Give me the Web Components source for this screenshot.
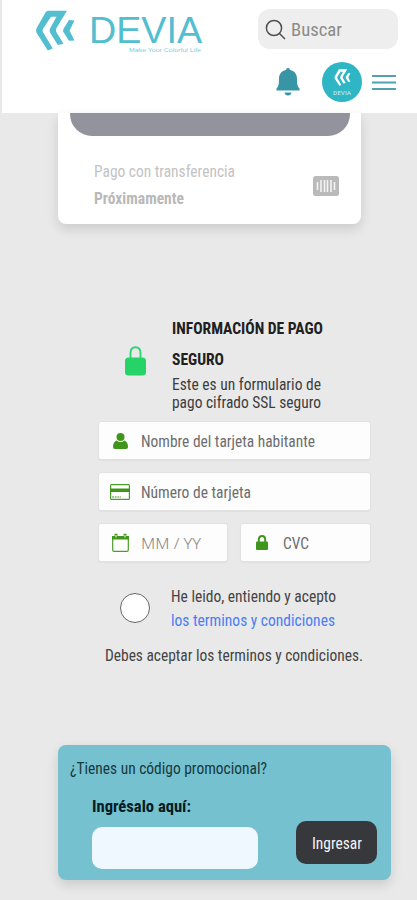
<!DOCTYPE html>
<html lang="es">
<head>
<meta charset="utf-8">
<meta name="viewport" content="width=device-width">
<title>Devia</title>
<style>
html,body{margin:0;height:900px;overflow:hidden;background:#e9e9e9}
body{font-family:"Roboto Condensed",Roboto,"Liberation Sans",sans-serif;color:#333}
</style>
</head>
<body>
<checkout-page></checkout-page>
<script>
const define = (name, html, setup) => customElements.define(name, class extends HTMLElement {
  connectedCallback() {
    if (this.shadowRoot) return;
    const t = document.createElement('template');
    t.innerHTML = html;
    this.attachShadow({mode: 'open'}).append(t.content.cloneNode(true));
    if (setup) setup(this, this.shadowRoot);
  }
});

// One line of condensed text, set to the width given in "w".
define('text-line', `
<style>
:host{display:block;height:18px;line-height:20px;font-size:15.700px;white-space:nowrap;flex:none}
span{display:inline-block;transform-origin:0 50%;vertical-align:top;font-stretch:75%;line-height:inherit}
</style><span><slot></slot></span>`, (host, root) => {
  const w = +host.getAttribute('w'), s = root.querySelector('span');
  host.style.width = w + 'px';
  s.style.transform = 'scaleX(' + w / s.getBoundingClientRect().width + ')';
});

define('brand-mark', `
<style>:host{display:block}svg{display:block;width:100%;height:100%}</style>
<svg viewBox="0 0 39 41" fill="currentColor">
<path d="M12 .8H31L20.800 17.500Q19.300 20 20.600 22.500L27.500 33.800L21.800 35L14.300 23Q13 20.500 14.300 18L20.500 6.800H15L7.200 18.500Q6 20.500 7.200 22.500L16.800 38.500L11.800 40.500L.7 23Q-.5 20.500 .7 18L9.500 2.500Q10.500 .8 12 .8Z"/>
<path d="M33 10L38.500 10.500L33.500 20.500L38.500 30.500L33 30.800L27.700 22.500Q26.500 20.500 27.700 18.500Z"/>
</svg>`);

define('devia-logo', `
<style>
:host{display:flex;width:168px;height:45px;color:#52bed0;flex:none}
brand-mark{width:39px;height:41px;flex:none;margin-top:1px}
div{margin-left:14px;display:flex;flex-direction:column}
.n{font-family:"Liberation Sans",sans-serif;font-size:37px;height:38px;line-height:43px}
.t{font-family:"Liberation Sans",sans-serif;font-size:6px;height:7px;line-height:7px;margin-left:40px;color:#7fcddb}
</style>
<brand-mark></brand-mark>
<div><text-line class="n" w="113">DEVIA</text-line><text-line class="t" w="72">Make Your Colorful Life</text-line></div>`);

define('search-box', `
<style>
:host{display:flex;align-items:center;width:140px;height:40px;border-radius:12px;background:#eee;box-sizing:border-box;padding-left:7px;gap:5px;color:#8b8b8b;margin-left:auto}
text-line{font-size:19px;height:24px;line-height:25px}
</style>
<svg width="21" height="21" viewBox="0 0 21 21" fill="none" stroke="#505050" stroke-width="1.5"><circle cx="9" cy="9" r="7.600"/><path d="M14.500 14.500L20 20"/></svg>
<text-line w="51">Buscar</text-line>`);

define('user-avatar', `
<style>
:host{display:flex;flex-direction:column;align-items:center;width:40px;height:40px;border-radius:50%;background:#2eb6c5;color:#fff;box-sizing:border-box;padding-top:7px}
brand-mark{width:19px;height:17px}
text-line{font-size:6px;height:8px;line-height:8px;margin-top:3px;color:#c4edf1}
</style>
<brand-mark></brand-mark><text-line w="18">DEVIA</text-line>`);

define('app-header', `
<style>
:host{display:block;height:113px;margin-left:2px;background:#fff;box-sizing:border-box}
.a{display:flex;padding:9px 19px 0 34px;height:52px;box-sizing:border-box}
.b{display:flex;justify-content:flex-end;align-items:center;padding-right:21px;height:60px}
user-avatar{margin-left:22px;margin-right:10px}
</style>
<div class="a"><devia-logo></devia-logo><search-box></search-box></div>
<div class="b">
<svg width="24" height="28" viewBox="0 0 24 28" fill="#3795a5"><path d="M12 0Q14 0 14 2C19 3 21 6.500 21 11C21 16 21.500 18.500 23.500 20.500V22.500H.5V20.500C2.500 18.500 3 16 3 11C3 6.500 5 3 10 2Q10 0 12 0ZM8.500 24.500H15.500Q15 27.500 12 27.500T8.500 24.500Z"/></svg>
<user-avatar></user-avatar>
<svg width="24" height="17" viewBox="0 0 24 17" stroke="#4fa0b0" stroke-width="2.200"><path d="M0 2H24M0 8.500H24M0 15H24"/></svg>
</div>`);

define('transfer-card', `
<style>
:host{display:block;margin-left:58px;width:303px;height:111px;background:#fff;border-radius:0 0 8px 8px;box-shadow:0 5px 12px rgba(0,0,0,.13);overflow:hidden}
.bar{margin:0 11px 0 12px;height:23px;border-radius:0 0 22px 22px;background:#92939c}
.row{display:flex;justify-content:space-between;padding:26px 22px 0 36px;color:#c3c3c3}
.l{display:flex;flex-direction:column;gap:9px}
b{color:#b9b9b9}
svg{margin-top:14px}
</style>
<div class="bar"></div>
<div class="row"><div class="l"><text-line w="141">Pago con transferencia</text-line><text-line w="90"><b>Próximamente</b></text-line></div>
<svg width="26" height="20" viewBox="0 0 26 20"><rect width="26" height="20" rx="2.500" fill="#bababa"/><path d="M4.500 6V14M8 4V16M11.500 4V16M14.500 4V16M18 4V16M21.500 6V14" stroke="#f4f4f4" stroke-width="1.600"/></svg></div>`);

define('secure-heading', `
<style>
:host{display:flex;margin:95px 0 0 125px}
svg{margin:27px 26px 0 0;flex:none}
div{display:flex;flex-direction:column;color:#3d3d3d}
b{color:#202020}.s{margin:13px 0 7px}.p{height:17px;line-height:19px}
</style>
<svg width="21" height="30" viewBox="0 0 21 30"><path d="M5.500 13V7Q5.500 1.200 10.500 1.200T15.500 7V13" fill="none" stroke="#29d970" stroke-width="1.900"/><rect y="11.500" width="21" height="18" rx="3.500" fill="#25d366"/></svg>
<div><text-line w="151"><b>INFORMACIÓN DE PAGO</b></text-line><text-line class="s" w="52"><b>SEGURO</b></text-line><text-line w="149">Este es un formulario de</text-line><text-line class="p" w="149">pago cifrado SSL seguro</text-line></div>`);

define('form-field', `
<style>
:host{display:flex;align-items:center;box-sizing:border-box;height:39px;background:#fdfdfd;border:1px solid #e1e1e1;border-radius:3px;color:#6d6d6d;padding-left:11px;box-shadow:0 1px 1px rgba(0,0,0,.04)}
i{display:flex;width:20px;justify-content:center;margin-right:11px}
</style><i><slot name="icon"></slot></i><slot></slot>`);

define('card-form', `
<style>
:host{display:grid;grid-template-columns:130px 131px;gap:12px;margin:11px 0 0 98px}
.w{grid-column:1/3}
.d{font-family:"Noto Sans","Liberation Sans",sans-serif;font-weight:300;font-size:15px;line-height:18px;color:#858585}
</style>
<form-field class="w"><svg slot="icon" width="15" height="16" viewBox="0 0 15 16" fill="#40961a"><circle cx="7.500" cy="4" r="4"/><path d="M3.500 7.500Q7.500 10.500 11.500 7.500Q15 9 15 14Q15 16 13 16H2Q0 16 0 14Q0 9 3.500 7.500Z"/></svg><text-line w="174">Nombre del tarjeta habitante</text-line></form-field>
<form-field class="w"><svg slot="icon" width="20" height="16" viewBox="0 0 20 16"><rect x=".6" y=".6" width="18.800" height="14.800" rx="1" fill="#fff" stroke="#4c9b2b" stroke-width="1.200"/><path d="M0 4.500H20V8H0Z" fill="#40961a"/><path d="M2 13H11" stroke="#4c9b2b" stroke-width="1.200" stroke-dasharray="2 .7"/></svg><text-line w="110">Número de tarjeta</text-line></form-field>
<form-field><svg slot="icon" width="17" height="19" viewBox="0 0 17 19"><path d="M.7 3.500H16.300V17Q16.300 18.300 15 18.300H2Q.7 18.300 .7 17Z" fill="#fff" stroke="#4c9b2b" stroke-width="1.200"/><path d="M0 3H17V6.500H0Z" fill="#40961a"/><path d="M4 4.500V.8M13 4.500V.8" stroke="#40961a" stroke-width="2.800"/><path d="M4 4.500V2M13 4.500V2" stroke="#fff" stroke-width="1"/></svg><text-line class="d" w="60">MM / YY</text-line></form-field>
<form-field><svg slot="icon" width="12" height="15" viewBox="0 0 12 15"><path d="M2.800 8V4.500Q2.800 1 6 1T9.200 4.500V8" fill="none" stroke="#40961a" stroke-width="1.900"/><rect y="6.500" width="12" height="8.500" rx="1" fill="#40961a"/></svg><text-line w="26">CVC</text-line></form-field>`);

define('terms-check', `
<style>
:host{display:block;color:#444}
.r{display:flex;margin:25px 0 0 120px}
i{box-sizing:border-box;width:30px;height:30px;border:1.300px solid #666;border-radius:50%;background:#fff;margin:6px 21px 0 0}
.k{margin-top:6px;color:#4b7df3}
.n{margin:17px 0 0 105px}
</style>
<div class="r"><i></i><div><text-line w="165">He leido, entiendo y acepto</text-line><text-line class="k" w="164">los terminos y condiciones</text-line></div></div>
<text-line class="n" w="258">Debes aceptar los terminos y condiciones.</text-line>`);

define('promo-box', `
<style>
:host{display:block;box-sizing:border-box;margin:81px 0 0 58px;width:333px;height:135px;border-radius:8px;background:#75c1cf;box-shadow:0 5px 12px rgba(0,0,0,.13);padding:14px 14px 0 12px;color:#163940}
.r{display:flex;justify-content:space-between;padding-left:22px;margin-top:20px}
b{color:#071c22}
.i{width:166px;height:42px;border-radius:10px;background:#f0f8ff;margin-top:12px}
.b{display:flex;align-items:center;justify-content:center;width:81px;height:43px;border-radius:10px;background:#37383c;color:#f4f4f4;margin-top:24px}
</style>
<text-line w="197">¿Tienes un código promocional?</text-line>
<div class="r"><div><text-line w="99"><b>Ingrésalo aquí:</b></text-line><div class="i"></div></div><div class="b"><text-line w="50">Ingresar</text-line></div></div>`);

define('checkout-page', `
<style>:host{display:block;width:417px;height:900px;overflow:hidden;background:#e9e9e9}</style>
<app-header></app-header><transfer-card></transfer-card><secure-heading></secure-heading><card-form></card-form><terms-check></terms-check><promo-box></promo-box>`);
</script>
</body>
</html>
